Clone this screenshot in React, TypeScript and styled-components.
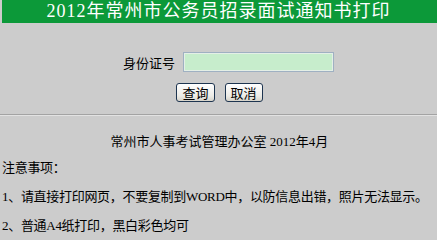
import React from "react";
import styled, { createGlobalStyle } from "styled-components";

const GlobalStyle = createGlobalStyle`
  html, body {
    margin: 0;
    padding: 0;
    background: #cccccc;
  }
  body {
    font-family: "Liberation Serif", "Noto Sans CJK SC", serif;
    font-size: 13px;
    color: #000;
  }
`;

const Page = styled.div`
  padding: 0 0 0 2px;
  overflow: hidden;
`;

const Header = styled.div`
  height: 23px;
  background: #0c9939;
  color: #fff;
  font-size: 18px;
  line-height: 23px;
  letter-spacing: 1px;
  text-align: center;
  padding-right: 2px;
`;

const Form = styled.div`
  display: flex;
  flex-direction: column;
  align-items: center;
  padding-top: 29px;
  gap: 11px;
`;

const FieldRow = styled.div`
  display: flex;
  align-items: center;
  gap: 8px;
  padding-left: 18px;
`;

const Label = styled.label`
  font-family: "Noto Sans CJK SC", sans-serif;
  font-size: 13px;
`;

const Input = styled.input`
  box-sizing: border-box;
  width: 151px;
  height: 20px;
  margin: 0;
  border: 1px solid #9fb0c2;
  box-shadow: inset 0 0 0 1px #e4efe6;
  background: #c7edcc;
  outline: none;
`;

const Buttons = styled.div`
  display: flex;
  gap: 10px;
`;

const Button = styled.button`
  box-sizing: border-box;
  height: 19px;
  padding: 0 5px;
  margin: 0;
  border: 1px solid #1e3550;
  border-radius: 3px;
  background: linear-gradient(#ffffff, #ecebe6 70%, #d6d3ca);
  font-family: "Noto Sans CJK SC", sans-serif;
  font-size: 13px;
  line-height: 17px;
  color: #000;
`;

const Rule = styled.hr`
  margin: 12px 0 0 -2px;
  border: 0;
  border-top: 1px solid #a3a3a3;
  border-bottom: 1px solid #e2e2e2;
`;

const Office = styled.p`
  margin: 18px 0 0;
  text-align: center;
  line-height: 16px;
`;

const Note = styled.p<{ $gap: number }>`
  margin: ${(p) => p.$gap}px 0 0;
  line-height: 16px;
  letter-spacing: -0.3px;
  white-space: nowrap;
`;

export default function App() {
  return (
    <Page>
      <GlobalStyle />
      <Header>2012年常州市公务员招录面试通知书打印</Header>
      <Form>
        <FieldRow>
          <Label htmlFor="idcard">身份证号</Label>
          <Input id="idcard" type="text" />
        </FieldRow>
        <Buttons>
          <Button type="button">查询</Button>
          <Button type="button">取消</Button>
        </Buttons>
      </Form>
      <Rule />
      <Office>常州市人事考试管理办公室 2012年4月</Office>
      <Note $gap={10}>注意事项：</Note>
      <Note $gap={13}>1、请直接打印网页，不要复制到WORD中，以防信息出错，照片无法显示。</Note>
      <Note $gap={13}>2、普通A4纸打印，黑白彩色均可</Note>
    </Page>
  );
}
